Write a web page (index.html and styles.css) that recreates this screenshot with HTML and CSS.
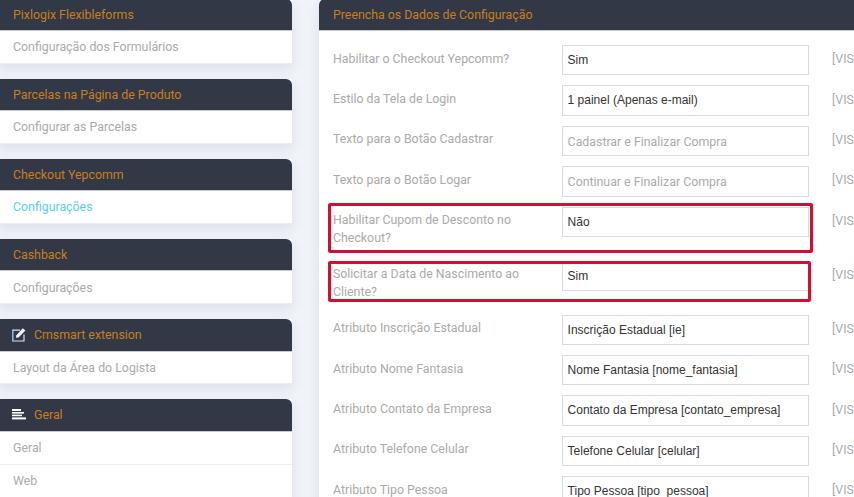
FILE: index.html
```html
<!DOCTYPE html>
<html lang="pt-BR">
<head>
<meta charset="utf-8">
<title>Configuração</title>
<link rel="stylesheet" href="styles.css">
</head>
<body>
<div class="layout">
  <aside class="sidebar">
    <section class="panel">
      <h3 class="panel-head">Pixlogix Flexibleforms</h3>
      <ul class="menu"><li>Configuração dos Formulários</li></ul>
    </section>
    <section class="panel">
      <h3 class="panel-head">Parcelas na Página de Produto</h3>
      <ul class="menu"><li>Configurar as Parcelas</li></ul>
    </section>
    <section class="panel">
      <h3 class="panel-head">Checkout Yepcomm</h3>
      <ul class="menu"><li class="active">Configurações</li></ul>
    </section>
    <section class="panel">
      <h3 class="panel-head">Cashback</h3>
      <ul class="menu"><li class="nudge">Configurações</li></ul>
    </section>
    <section class="panel">
      <h3 class="panel-head with-icon">
        <svg class="icon" width="14" height="15" viewBox="0 0 14 15" fill="none">
          <path d="M8 3.2H.7V14H12V7.5" stroke="#dbe3ee" stroke-width="1.2"/>
          <path d="M.7 3.2V14" stroke="#7fb2e0" stroke-width="1.2"/>
          <path d="M3.8 10.8 4.4 8.2 10.8 1.2 13.4 3.4 6.6 10.4Z" fill="#eef1f5"/>
        </svg>
        Cmsmart extension
      </h3>
      <ul class="menu"><li>Layout da Área do Logista</li></ul>
    </section>
    <section class="panel">
      <h3 class="panel-head with-icon">
        <svg class="icon" width="14" height="11" viewBox="0 0 14 11" fill="#fff">
          <rect x="0" y="0" width="9" height="2"/>
          <rect x="0" y="3" width="12" height="1.6"/>
          <rect x="0" y="5.6" width="10" height="1.6"/>
          <rect x="0" y="8.4" width="14" height="2"/>
        </svg>
        Geral
      </h3>
      <ul class="menu"><li>Geral</li><li>Web</li></ul>
    </section>
  </aside>
  <main class="content">
    <h3 class="panel-head main-head">Preencha os Dados de Configuração</h3>
    <div class="form">
      <div class="row"><div class="label">Habilitar o Checkout Yepcomm?</div><div class="field value">Sim</div><div class="scope">[VISÃO DA LOJA]</div></div>
      <div class="row"><div class="label">Estilo da Tela de Login</div><div class="field value">1 painel (Apenas e-mail)</div><div class="scope">[VISÃO DA LOJA]</div></div>
      <div class="row"><div class="label">Texto para o Botão Cadastrar</div><div class="field hint">Cadastrar e Finalizar Compra</div><div class="scope">[VISÃO DA LOJA]</div></div>
      <div class="row"><div class="label">Texto para o Botão Logar</div><div class="field hint">Continuar e Finalizar Compra</div><div class="scope">[VISÃO DA LOJA]</div></div>
      <div class="row tall first-mark"><div class="label">Habilitar Cupom de Desconto no Checkout?</div><div class="field value">Não</div><div class="scope">[VISÃO DA LOJA]</div><span class="mark"></span></div>
      <div class="row tall second-mark"><div class="label">Solicitar a Data de Nascimento ao Cliente?</div><div class="field value">Sim</div><div class="scope">[VISÃO DA LOJA]</div><span class="mark"></span></div>
      <div class="row"><div class="label">Atributo Inscrição Estadual</div><div class="field value">Inscrição Estadual [ie]</div><div class="scope">[VISÃO DA LOJA]</div></div>
      <div class="row"><div class="label">Atributo Nome Fantasia</div><div class="field value">Nome Fantasia [nome_fantasia]</div><div class="scope">[VISÃO DA LOJA]</div></div>
      <div class="row"><div class="label">Atributo Contato da Empresa</div><div class="field value">Contato da Empresa [contato_empresa]</div><div class="scope">[VISÃO DA LOJA]</div></div>
      <div class="row"><div class="label">Atributo Telefone Celular</div><div class="field value">Telefone Celular [celular]</div><div class="scope">[VISÃO DA LOJA]</div></div>
      <div class="row"><div class="label">Atributo Tipo Pessoa</div><div class="field value">Tipo Pessoa [tipo_pessoa]</div><div class="scope">[VISÃO DA LOJA]</div></div>
    </div>
  </main>
</div>
</body>
</html>
```
FILE: styles.css
```css
* { box-sizing: border-box; }
html, body { margin: 0; height: 100%; overflow: hidden; }
body { background: #f0f3f8; font-family: Roboto, sans-serif; font-size: 12.35px; color: #aaa; }
.layout { display: flex; gap: 27px; align-items: flex-start; margin-top: -1px; width: 900px; }
.sidebar { width: 292px; flex: none; display: flex; flex-direction: column; gap: 15px; }
.panel { background: #fff; box-shadow: 0 5px 12px rgba(50, 60, 90, .1); }
.panel-head {
  margin: 0; height: 32px; padding: 0 13px; display: flex; align-items: center; gap: 8px;
  background: #333846; border-bottom: 1px solid #c8cbd2; border-radius: 0 6px 0 0;
  font-size: 12.35px; font-weight: 400; color: #c87f1e; white-space: nowrap;
}
.with-icon { height: 33px; padding-left: 12px; padding-bottom: 1px; }
.icon { flex: none; }
.menu { margin: 0; padding: 0; list-style: none; }
.menu li { height: 33px; padding: 0 13px; line-height: 32px; border-bottom: 1px solid #eceef1; }
.menu li.active { color: #5ccdf0; }
.menu li.nudge { line-height: 34px; }
.with-icon + .menu li:first-child:last-child { height: 32px; }
.content { flex: 1; background: #fff; min-width: 0; box-shadow: 0 5px 12px rgba(50, 60, 90, .1); }
.main-head { border-radius: 6px 0 0 0; padding-left: 14px; }
.form { padding: 14px 0 0 14px; }
.row { position: relative; display: flex; align-items: flex-start; margin-bottom: 10px; min-height: 30.4px; }
.label { width: 229px; flex: none; padding: 4.6px 10px 0 0; line-height: 18px; }
.tall { min-height: 44px; }
.field {
  width: 247px; flex: none; height: 30.4px; padding: 0 4.6px; border: 1px solid #d9dae0;
  line-height: 28px; white-space: nowrap; overflow: hidden;
}
.value { font-family: "Liberation Sans", sans-serif; font-size: 12px; color: #333; }
.hint { color: #aaa; padding-top: 1px; }
.scope { margin-left: 23px; padding-top: 7.2px; white-space: nowrap; }
.mark { position: absolute; border: 3px solid #cf1030; border-radius: 2px; pointer-events: none; }
.first-mark .mark { left: -5.5px; top: -4px; width: 485px; height: 50px; }
.second-mark .mark { left: -5.5px; top: 0; width: 483px; height: 41px; }
```
